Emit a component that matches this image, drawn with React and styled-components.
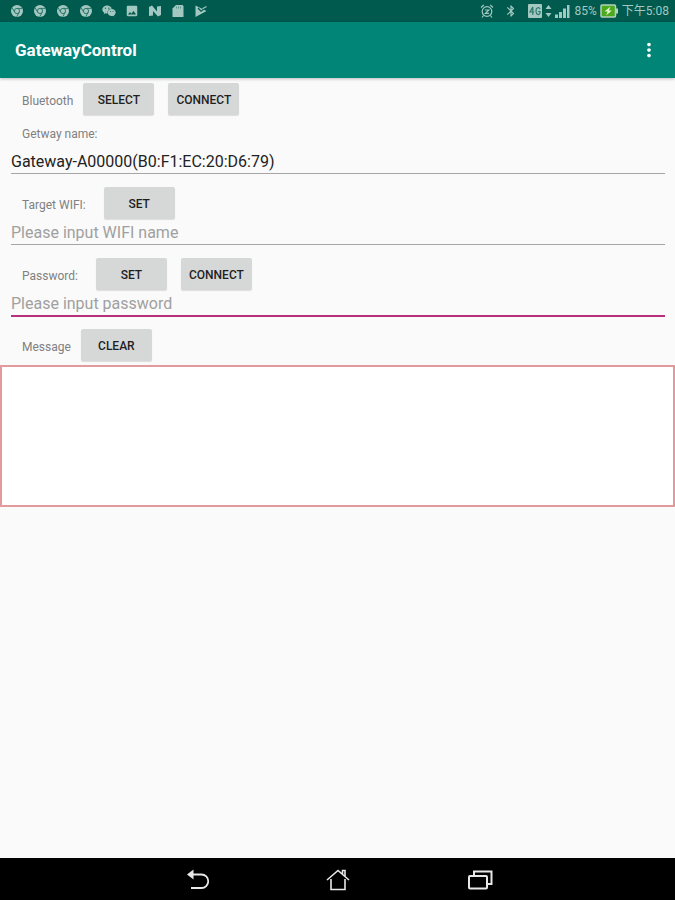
import React, { useState } from 'react';
import styled, { createGlobalStyle } from 'styled-components';
import { FaWeixin } from 'react-icons/fa';
import { MdImage, MdBluetooth, MdMoreVert } from 'react-icons/md';

const GlobalStyle = createGlobalStyle`
    * {
        box-sizing: border-box;
    }
    body {
        margin: 0;
        background: #fafafa;
        font-family: Roboto, "Noto Sans CJK TC", sans-serif;
    }
    button, input, textarea {
        font-family: inherit;
    }
`;

const Screen = styled.div`
    display: flex;
    flex-direction: column;
    min-height: 100vh;
`;

const StatusBar = styled.header`
    display: flex;
    justify-content: space-between;
    align-items: center;
    height: 22px;
    padding: 0 6px 0 10px;
    background: #005a4d;
    color: #a3c8c1;
    font-size: 12px;
    line-height: 16px;
    white-space: nowrap;
`;

const Notifications = styled.div`
    display: flex;
    align-items: center;
    gap: 9px;
`;

const SystemStatus = styled.div`
    display: flex;
    align-items: center;
    gap: ${props => props.$gap};
`;

const AppBar = styled.div`
    display: flex;
    justify-content: space-between;
    align-items: center;
    height: 56px;
    padding: 0 15px;
    background: #008577;
    color: #fff;
    box-shadow: 0 1px 3px rgba(0, 0, 0, 0.25);
`;

const Title = styled.h1`
    margin: 0;
    font-size: 17px;
    font-weight: 700;
`;

const MenuButton = styled.button`
    display: flex;
    padding: 0;
    border: 0;
    background: none;
    color: #fff;
`;

const Content = styled.main`
    flex: 1;
    padding-top: 5px;
`;

const Row = styled.div`
    display: flex;
    align-items: center;
    height: 32px;
    padding-left: 22px;
`;

const Label = styled.label`
    display: block;
    padding-top: 3px;
    margin-right: ${props => (props.$wide ? '18px' : '10px')};
    color: #808080;
    font-size: 12px;
    line-height: 16px;
`;

const NameLabel = styled(Label)`
    padding: 0;
    margin: 11px 22px 6px;
`;

const Button = styled.button`
    width: 71px;
    height: 32px;
    margin-right: 14px;
    padding: 2px 0 0;
    border: 0;
    border-radius: 2px;
    background: #d6d8d7;
    color: #1f1f1f;
    font-size: 12px;
    font-weight: 500;
    box-shadow: 0 1px 1px rgba(0, 0, 0, 0.12);
`;

const Field = styled.div`
    padding: 0 10px 0 11px;
    margin-bottom: ${props => (props.$active ? '12px' : '13px')};
`;

const TextInput = styled.input`
    display: block;
    width: 100%;
    height: ${props => (props.$active ? '27px' : '26px')};
    padding: 2px 0 0;
    border: 0;
    border-bottom: ${props => (props.$active ? '2px solid #b82f7c' : '1px solid #a6a6a6')};
    border-radius: 0;
    outline: 0;
    background: transparent;
    color: #222;
    font-size: 16px;
    &::placeholder {
        color: #a0a0a0;
        opacity: 1;
    }
`;

const MessageBox = styled.textarea`
    display: block;
    width: 100%;
    height: 142px;
    margin-top: 4px;
    padding: 8px;
    border: 2px solid #e29a9c;
    border-radius: 0;
    outline: 0;
    background: #fff;
    resize: none;
`;

const NavBar = styled.nav`
    display: flex;
    justify-content: center;
    align-items: center;
    gap: 114px;
    height: 42px;
    padding: 2px 0 0 4px;
    background: #000;
`;

const NavButton = styled.button`
    display: flex;
    padding: 0;
    border: 0;
    background: none;
    color: #e8e8e8;
`;

const ChromeIcon = () => (
    <svg width="14" height="14" viewBox="0 0 14 14">
        <circle cx="7" cy="7" r="6" fill="currentColor" />
        <circle cx="7" cy="7" r="2.6" fill="none" stroke="#2d786c" />
        <path d="M7 4.4h5.2M4.7 8.2 2.2 3.9M9.2 8.3 6.7 12.8" stroke="#2d786c" />
    </svg>
);

const NougatIcon = () => (
    <svg width="14" height="14" viewBox="0 0 14 14">
        <path d="M1 12V3L4 1.500l5 6V2.500l4-.5v9L10 12.500 5 7v4.500z" fill="currentColor" />
    </svg>
);

const SdCardIcon = () => (
    <svg width="14" height="14" viewBox="0 0 14 14">
        <path d="M5 1h6.5l1 1v11h-11V4.5z" fill="currentColor" />
        <path d="M5.5 2.5v2M7.5 2.5v2M9.5 2.5v2" stroke="#5a988d" />
    </svg>
);

const PlayIcon = () => (
    <svg width="14" height="14" viewBox="0 0 14 14">
        <path d="M1.5 1.5 12.5 7l-11 6z" fill="currentColor" />
        <path d="m4 4 3 3.2L12.5 3" fill="none" stroke="#005a4d" strokeWidth="1.2" />
        <path d="M8.5 4.8 12.5 2.500" stroke="currentColor" strokeWidth="1.2" />
    </svg>
);

const AlarmIcon = () => (
    <svg width="14" height="14" viewBox="0 0 14 14" fill="none" stroke="currentColor" strokeWidth="1.2">
        <circle cx="7" cy="7.5" r="4.8" />
        <path d="M1 3.5 3.8 1M10.2 1 13 3.5M3.5 11.5 2 13.5M10.5 11.5l1.5 2M5 6h3.8L5.4 9.4H9" />
    </svg>
);

const NetworkIcon = () => (
    <svg width="42" height="14" viewBox="0 0 42 14" fill="currentColor">
        <rect width="14" height="14" rx="1" />
        <path d="M4.8 3v8M4.8 3 2 8h4.2M12 5c-.5-2-4-2-4 2s3.6 4.5 4 2V7.5h-2" fill="none" stroke="#2d786c" strokeWidth="1.2" />
        <path d="M20.5 1 23.5 5h-6zM20.5 13l-3-4h6z" />
        <path d="M27 10.5h3V14h-3zM31 8h3v6h-3zM35 4.5h3V14h-3zM39 1h2.5v13H39z" />
    </svg>
);

const BatteryIcon = () => (
    <svg width="19" height="14" viewBox="0 0 19 14">
        <rect x="1" y="1" width="14.5" height="12" rx="1" fill="#4aa91c" stroke="#b5d2bd" strokeWidth="1.5" />
        <path d="M16 4.5h2v5h-2z" fill="#b5d2bd" />
        <path d="M10.5 2.5 4.5 7.5h3.2L6 11.5l6-5H8.8z" fill="#e6f4cf" />
    </svg>
);

const BackIcon = () => (
    <svg width="24" height="24" viewBox="0 0 24 24" fill="none" stroke="currentColor" strokeWidth="1.8">
        <path d="M6 6.500h9.500a6.500 6.500 0 0 1 0 13.500H5" />
        <path d="M1 6.500 7.500 1.500v10z" fill="currentColor" stroke="none" />
    </svg>
);

const HomeIcon = () => (
    <svg width="28" height="24" viewBox="0 0 28 24" fill="none" stroke="currentColor" strokeWidth="1.6">
        <path d="M3 12 14 2.5 25 12M7 11v10.500h14V11M18.5 6V2.5H21V8" />
    </svg>
);

const RecentIcon = () => (
    <svg width="28" height="24" viewBox="0 0 28 24" fill="none" stroke="currentColor" strokeWidth="2">
        <rect x="3" y="8" width="18" height="12.5" rx="1" />
        <path d="M8 7.5v-4h17.500V16H22" />
    </svg>
);

const App = () => {
    const [gateway, setGateway] = useState('Gateway-A00000(B0:F1:EC:20:D6:79)');
    const [wifi, setWifi] = useState('');
    const [password, setPassword] = useState('');
    const [message, setMessage] = useState('');

    return (
        <Screen>
            <GlobalStyle />
            <StatusBar>
                <Notifications>
                    <ChromeIcon />
                    <ChromeIcon />
                    <ChromeIcon />
                    <ChromeIcon />
                    <FaWeixin size={14} />
                    <MdImage size={14} />
                    <NougatIcon />
                    <SdCardIcon />
                    <PlayIcon />
                </Notifications>
                <SystemStatus $gap="10px">
                    <AlarmIcon />
                    <MdBluetooth size={14} />
                    <SystemStatus $gap="5px">
                        <NetworkIcon />
                        <SystemStatus $gap="3px">
                            <span>85%</span>
                            <BatteryIcon />
                            <span>下午5:08</span>
                        </SystemStatus>
                    </SystemStatus>
                </SystemStatus>
            </StatusBar>
            <AppBar>
                <Title>GatewayControl</Title>
                <MenuButton aria-label="More options">
                    <MdMoreVert size={22} />
                </MenuButton>
            </AppBar>
            <Content>
                <Row>
                    <Label as="span">Bluetooth</Label>
                    <Button>SELECT</Button>
                    <Button>CONNECT</Button>
                </Row>
                <NameLabel htmlFor="gateway">Getway name:</NameLabel>
                <Field>
                    <TextInput id="gateway" value={gateway} onChange={e => setGateway(e.target.value)} />
                </Field>
                <Row>
                    <Label htmlFor="wifi" $wide>Target WIFI:</Label>
                    <Button>SET</Button>
                </Row>
                <Field>
                    <TextInput id="wifi" placeholder="Please input WIFI name" value={wifi} onChange={e => setWifi(e.target.value)} />
                </Field>
                <Row>
                    <Label htmlFor="password" $wide>Password:</Label>
                    <Button>SET</Button>
                    <Button>CONNECT</Button>
                </Row>
                <Field $active>
                    <TextInput id="password" type="password" placeholder="Please input password" $active value={password} onChange={e => setPassword(e.target.value)} />
                </Field>
                <Row>
                    <Label htmlFor="message">Message</Label>
                    <Button onClick={() => setMessage('')}>CLEAR</Button>
                </Row>
                <MessageBox id="message" value={message} onChange={e => setMessage(e.target.value)} />
            </Content>
            <NavBar>
                <NavButton aria-label="Back"><BackIcon /></NavButton>
                <NavButton aria-label="Home"><HomeIcon /></NavButton>
                <NavButton aria-label="Recent apps"><RecentIcon /></NavButton>
            </NavBar>
        </Screen>
    );
};

export default App;
